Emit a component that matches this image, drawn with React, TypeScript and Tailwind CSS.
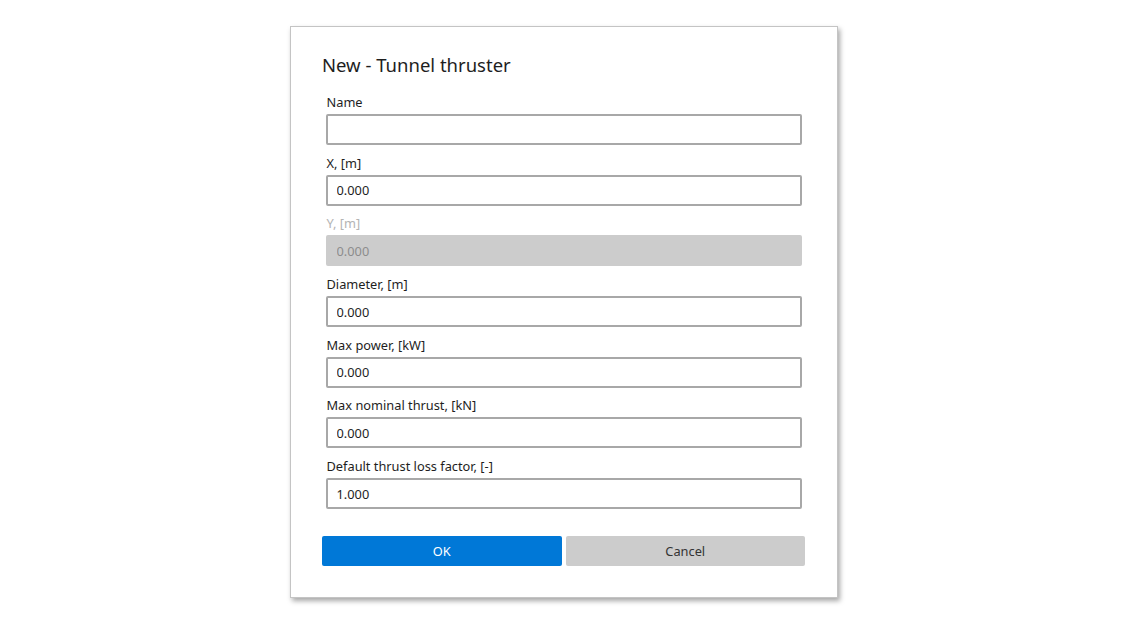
import { useState } from "react";

type Field = { label: string; value: string; disabled?: boolean };

const FIELDS: Field[] = [
  { label: "Name", value: "" },
  { label: "X, [m]", value: "0.000" },
  { label: "Y, [m]", value: "0.000", disabled: true },
  { label: "Diameter, [m]", value: "0.000" },
  { label: "Max power, [kW]", value: "0.000" },
  { label: "Max nominal thrust, [kN]", value: "0.000" },
  { label: "Default thrust loss factor, [-]", value: "1.000" },
];

function FormField({ field }: { field: Field }) {
  const [value, setValue] = useState(field.value);
  return (
    <div className="flex flex-col px-[3.5px]">
      <label
        className={`text-[12.8px] leading-[16px] pl-[1px] ${
          field.disabled ? "text-[#b4b4b4]" : "text-[#1e1e1e]"
        }`}
      >
        {field.label}
      </label>
      <input
        value={value}
        disabled={field.disabled}
        onChange={(e) => setValue(e.target.value)}
        className={`mt-[4px] h-[31px] w-full rounded-[2px] px-[9px] text-[12.8px] outline-none ${
          field.disabled
            ? "bg-[#cccccc] text-[#8c8c8c] border-2 border-[#cccccc]"
            : "bg-white text-[#1e1e1e] border-2 border-[#a8a8a8]"
        }`}
      />
    </div>
  );
}

export default function App() {
  return (
    <div
      className="w-full min-h-screen bg-white flex justify-center pt-[26px] pl-[2px]"
      style={{ fontFamily: '"Noto Sans", "Open Sans", sans-serif' }}
    >
      <div className="w-[548px] h-[572px] bg-white border border-[#c4c4c4] shadow-[2px_3px_5px_rgba(0,0,0,0.35)] pt-[26px] pl-[31px] pr-[32px]">
        {/* Title */}
        <h1 className="text-[18.5px] leading-[24px] text-[#1e1e1e]">New - Tunnel thruster</h1>

        {/* Fields */}
        <div className="mt-[17px] flex flex-col gap-[9.7px]">
          {FIELDS.map((f) => (
            <FormField key={f.label} field={f} />
          ))}
        </div>

        {/* Buttons */}
        <div className="mt-[27px] flex gap-[4px]">
          <button className="flex-1 h-[30px] rounded-[2px] bg-[#0078d7] text-white text-[12.8px]">
            OK
          </button>
          <button className="flex-1 h-[30px] rounded-[2px] bg-[#cccccc] text-[#333333] text-[12.8px]">
            Cancel
          </button>
        </div>
      </div>
    </div>
  );
}
